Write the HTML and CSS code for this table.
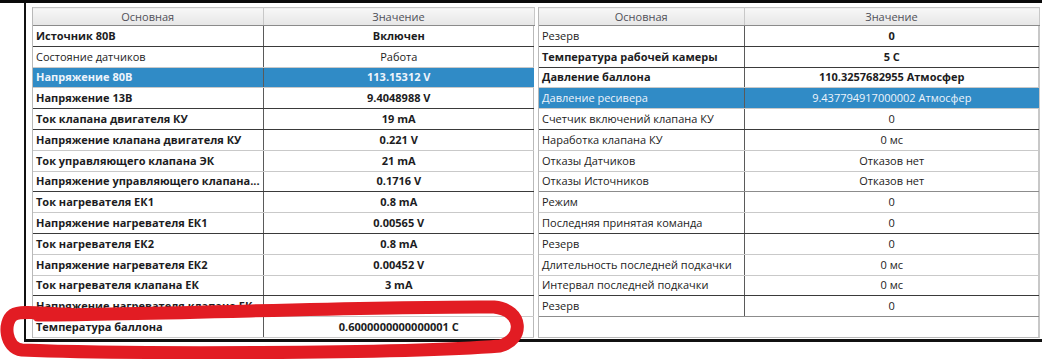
FILE: index.html
```html
<!DOCTYPE html>
<html lang="ru">
<head>
<meta charset="utf-8">
<title>Параметры</title>
<link rel="stylesheet" href="styles.css">
</head>
<body>
<div class="screen">
  <div class="frame">
    <div class="panel panel-left">
      <table class="grid">
        <colgroup><col class="lc1"><col class="lc2"></colgroup>
        <thead><tr><th>Основная</th><th>Значение</th></tr></thead>
        <tbody>
          <tr class="dk b"><td>Источник 80В</td><td>Включен</td></tr>
          <tr><td>Состояние датчиков</td><td>Работа</td></tr>
          <tr class="sel b"><td>Напряжение 80В</td><td>113.15312 V</td></tr>
          <tr class="dk b"><td>Напряжение 13В</td><td>9.4048988 V</td></tr>
          <tr class="dk b"><td>Ток клапана двигателя КУ</td><td>19 mA</td></tr>
          <tr class="b"><td>Напряжение клапана двигателя КУ</td><td>0.221 V</td></tr>
          <tr class="b"><td>Ток управляющего клапана ЭК</td><td>21 mA</td></tr>
          <tr class="dk b"><td>Напряжение управляющего клапана...</td><td>0.1716 V</td></tr>
          <tr class="b"><td>Ток нагревателя ЕК1</td><td>0.8 mA</td></tr>
          <tr class="dk b"><td>Напряжение нагревателя ЕК1</td><td>0.00565 V</td></tr>
          <tr class="b"><td>Ток нагревателя ЕК2</td><td>0.8 mA</td></tr>
          <tr class="b"><td>Напряжение нагревателя ЕК2</td><td>0.00452 V</td></tr>
          <tr class="dk b"><td>Ток нагревателя клапана ЕК</td><td>3 mA</td></tr>
          <tr class="b"><td>Напряжение нагревателя клапана ЕК</td><td>0.0077011 V</td></tr>
          <tr class="b"><td>Температура баллона</td><td>0.6000000000000001 C</td></tr>
        </tbody>
      </table>
    </div>
    <div class="panel panel-right">
      <table class="grid">
        <colgroup><col class="rc1"><col class="rc2"></colgroup>
        <thead><tr><th>Основная</th><th>Значение</th></tr></thead>
        <tbody>
          <tr class="dk"><td>Резерв</td><td class="bv">0</td></tr>
          <tr class="dk b"><td>Температура рабочей камеры</td><td>5 C</td></tr>
          <tr class="b"><td>Давление баллона</td><td>110.3257682955 Атмосфер</td></tr>
          <tr class="sel"><td>Давление ресивера</td><td>9.437794917000002 Атмосфер</td></tr>
          <tr class="dk"><td>Счетчик включений клапана КУ</td><td>0</td></tr>
          <tr><td>Наработка клапана КУ</td><td>0 мс</td></tr>
          <tr><td>Отказы Датчиков</td><td>Отказов нет</td></tr>
          <tr class="md"><td>Отказы Источников</td><td>Отказов нет</td></tr>
          <tr><td>Режим</td><td>0</td></tr>
          <tr class="dk"><td>Последняя принятая команда</td><td>0</td></tr>
          <tr><td>Резерв</td><td>0</td></tr>
          <tr><td>Длительность последней подкачки</td><td>0 мс</td></tr>
          <tr class="dk"><td>Интервал последней подкачки</td><td>0 мс</td></tr>
          <tr class="md"><td>Резерв</td><td>0</td></tr>
        </tbody>
      </table>
    </div>
  </div>
  <svg class="mark" width="1042" height="359" viewBox="0 0 1042 359" aria-hidden="true">
    <path d="M 38 315 C 180 314, 380 306, 494 307 C 524 310, 524 340, 500 346 C 400 354, 120 354, 22 350 C 5 348, 3 322, 13 315 C 21 310, 45 314, 70 314" fill="none" stroke="#e21c23" stroke-width="13" stroke-linecap="round" stroke-linejoin="round"/>
  </svg>
</div>
</body>
</html>
```

FILE: styles.css
```css
* { box-sizing: border-box; }

html, body {
  margin: 0;
  padding: 0;
  background: #ffffff;
}

body {
  font-family: "Open Sans", "Noto Sans", sans-serif;
  font-size: 11px;
  color: #1c1c22;
}

.screen {
  position: relative;
  width: 1042px;
  height: 359px;
  border-top: 3px solid #0a0a0a;
  overflow: hidden;
}

.frame {
  margin-left: 24px;
  height: 339px;
  border-left: 2px solid #111111;
  border-bottom: 3px solid #111111;
  padding: 4px 3px 0 6px;
  display: flex;
  gap: 4px;
}

.panel {
  width: 502px;
  height: 331px;
  border: 1px solid #b9b9b9;
  border-top: none;
  background: #ffffff;
}

.panel-right {
  border-right: 2px solid #c8c8c8;
}

.grid {
  width: 100%;
  border-collapse: collapse;
  table-layout: fixed;
}

.lc1 { width: 230px; }
.lc2 { width: 271px; }
.rc1 { width: 205px; }
.rc2 { width: 295px; }

.grid th {
  height: 18px;
  padding: 0;
  font-weight: 400;
  color: #505058;
  background: linear-gradient(#f7f7f7, #e6e6e6);
  border-top: 1px solid #c4c4c4;
  border-bottom: 1px solid #8a8a8a;
  border-right: 1px solid #c8c8c8;
  text-align: center;
  line-height: 16px;
}

.grid td {
  height: 20.8px;
  padding: 0 3px;
  line-height: 18px;
  white-space: nowrap;
  overflow: hidden;
  border-bottom: 1px solid #c9c9c9;
  border-right: 1px solid #5a5a5a;
}

.grid td + td {
  text-align: center;
  border-right: none;
}

.grid tr.dk td { border-bottom-color: #3a3a3a; }
.grid tr.md td { border-bottom-color: #8c8c8c; }

.grid tr.b td,
.grid td.bv { font-weight: 700; }

.grid tr.sel td {
  background: #308bc6;
  color: #eef4fb;
  border-bottom-color: #c9c9c9;
}

.mark {
  position: absolute;
  left: 0;
  top: -3px;
  pointer-events: none;
}
```
